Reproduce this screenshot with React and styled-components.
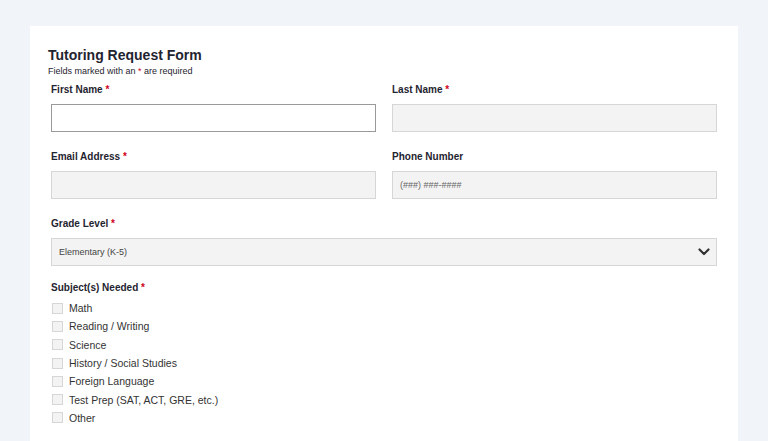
import React from 'react';
import styled, { createGlobalStyle } from 'styled-components';

const Global = createGlobalStyle`
  body {
    margin: 0;
    background: #f1f4f8;
    font-family: "Liberation Sans", Arial, sans-serif;
    color: #1f2430;
  }
`;

const Page = styled.div`
  padding: 26px 30px 0 30px;
  height: 441px;
  box-sizing: border-box;
  overflow: hidden;
`;

const Card = styled.div`
  background: #fff;
  padding: 20px 21px 20px 18px;
  min-height: 440px;
`;

const Title = styled.h1`
  margin: 0;
  font-size: 14px;
  font-weight: bold;
  line-height: 18px;
`;

const Note = styled.p`
  margin: 1px 0 0 0;
  font-size: 9px;
  line-height: 12px;
`;

const Req = styled.span`
  color: #d0021b;
`;

const Fields = styled.div`
  padding-left: 3px;
  display: flex;
  flex-direction: column;
  gap: 18px;
  margin-top: 6px;
`;

const Row = styled.div`
  display: grid;
  grid-template-columns: 1fr 1fr;
  gap: 16px;
`;

const Field = styled.div`
  display: flex;
  flex-direction: column;
  margin-top: ${p => p.$pull || 0}px;
`;

const Label = styled.label`
  font-size: 10px;
  font-weight: bold;
  line-height: 14px;
  margin-bottom: 7px;
`;

const Input = styled.input`
  box-sizing: border-box;
  height: 28px;
  width: 100%;
  border: 1px solid ${p => (p.$active ? '#9a9a9a' : '#d6d6d6')};
  background: ${p => (p.$active ? '#fff' : '#f3f3f3')};
  padding: 0 7px;
  font-family: inherit;
  font-size: 9px;
  outline: none;
  &::placeholder { color: #666; }
`;

const Select = styled.div`
  box-sizing: border-box;
  height: 28px;
  border: 1px solid #d6d6d6;
  background: #f3f3f3;
  display: flex;
  align-items: center;
  justify-content: space-between;
  padding: 0 6px 0 7px;
  font-size: 9px;
  color: #444;
`;

const Checks = styled.div`
  display: flex;
  flex-direction: column;
  margin-top: -3px;
`;

const Check = styled.label`
  display: flex;
  align-items: center;
  gap: 6px;
  height: 18.3px;
  font-size: 10.5px;
  color: #333;
`;

const Box = styled.span`
  width: 9px;
  height: 9px;
  margin-left: 1px;
  border: 1px solid #d6d6d6;
  background: #f3f3f3;
`;

const subjects = ['Math', 'Reading / Writing', 'Science', 'History / Social Studies', 'Foreign Language', 'Test Prep (SAT, ACT, GRE, etc.)', 'Other'];

export default function App() {
  return (
    <>
      <Global />
      <Page>
        <Card>
          <Title>Tutoring Request Form</Title>
          <Note>Fields marked with an <Req>*</Req> are required</Note>
          <Fields>
            <Row>
              <Field>
                <Label>First Name <Req>*</Req></Label>
                <Input $active />
              </Field>
              <Field>
                <Label>Last Name <Req>*</Req></Label>
                <Input />
              </Field>
            </Row>
            <Row>
              <Field>
                <Label>Email Address <Req>*</Req></Label>
                <Input />
              </Field>
              <Field>
                <Label>Phone Number</Label>
                <Input placeholder="(###) ###-####" />
              </Field>
            </Row>
            <Field>
              <Label>Grade Level <Req>*</Req></Label>
              <Select>
                Elementary (K-5)
                <svg width="12" height="8" viewBox="0 0 12 8">
                  <path d="M1.5 1.5 L6 6 L10.5 1.5" fill="none" stroke="#333" strokeWidth="2.2" strokeLinecap="round" strokeLinejoin="round" />
                </svg>
              </Select>
            </Field>
            <Field $pull={-3}>
              <Label>Subject(s) Needed <Req>*</Req></Label>
              <Checks>
                {subjects.map(s => (
                  <Check key={s}><Box />{s}</Check>
                ))}
              </Checks>
            </Field>
          </Fields>
        </Card>
      </Page>
    </>
  );
}
